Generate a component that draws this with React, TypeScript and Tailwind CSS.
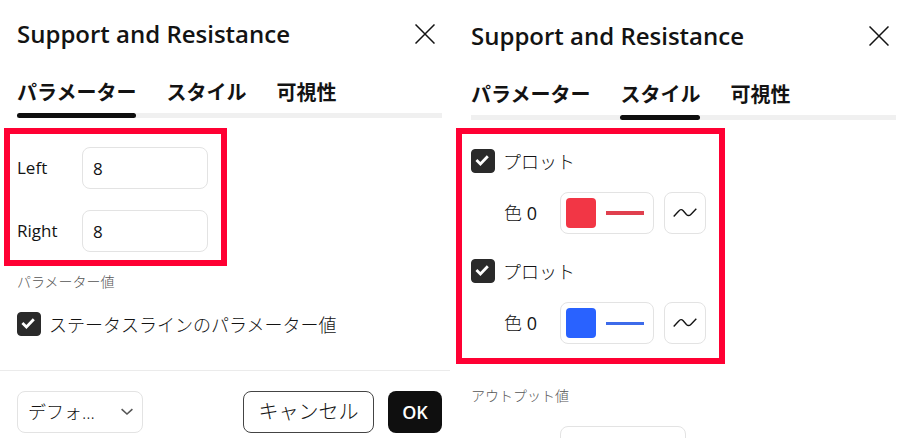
import { useState, type ReactNode } from "react";
import clsx from "clsx";

const tabs = ["パラメーター", "スタイル", "可視性"];

const plots = [
  { id: "plot-1", swatch: "bg-[#f23645]", line: "h-1 bg-[#e0404e]" },
  { id: "plot-2", swatch: "bg-[#2962ff]", line: "h-[3px] bg-[#3d6bea]" },
];

function DialogHeader({ activeTab }: { activeTab: string }) {
  const [active, setActive] = useState(activeTab);

  return (
    <header>
      <div className="flex h-[42px] items-center justify-between">
        <h2 className="text-2xl font-semibold">Support and Resistance</h2>
        <button type="button" aria-label="閉じる" className="py-2 pl-2 pr-[7px]">
          <svg className="size-5" viewBox="0 0 20 20" fill="none" stroke="currentColor" strokeWidth={1.5}>
            <path d="M0.5 0.5l19 19M19.5 0.5l-19 19" />
          </svg>
        </button>
      </div>
      <div role="tablist" className="mt-6 flex gap-[30px] border-b-[5px] border-[#f0f0f0]">
        {tabs.map((tab) => (
          <button
            key={tab}
            type="button"
            role="tab"
            aria-selected={tab === active}
            onClick={() => setActive(tab)}
            className="-mb-[5px] whitespace-nowrap text-xl font-bold"
          >
            {tab}
            <span className={clsx("mt-[6px] block h-[5px] rounded-full", tab === active && "bg-[#0f0f0f]")} />
          </button>
        ))}
      </div>
    </header>
  );
}

function Checkbox({ id, children }: { id: string; children: ReactNode }) {
  return (
    <div className="flex items-center gap-2">
      <span className="grid size-6 shrink-0 *:col-start-1 *:row-start-1">
        <input
          id={id}
          type="checkbox"
          defaultChecked
          className="peer size-6 appearance-none rounded border border-[#2a2a2a] checked:bg-[#2a2a2a]"
        />
        <svg
          className="pointer-events-none invisible size-6 text-white peer-checked:visible"
          viewBox="0 0 24 24"
          fill="none"
          stroke="currentColor"
          strokeWidth={2.8}
        >
          <path d="M5.4 11.1l4 3.9 7.4-7.8" />
        </svg>
      </span>
      <label htmlFor={id} className="whitespace-nowrap pt-[2px] text-lg font-light leading-6">
        {children}
      </label>
    </div>
  );
}

function NumberField({ id, label }: { id: string; label: string }) {
  return (
    <div className="flex items-center">
      <label htmlFor={id} className="w-[65px]">
        {label}
      </label>
      <input
        id={id}
        type="text"
        inputMode="numeric"
        defaultValue="8"
        className="h-[42px] w-[126px] rounded-lg border border-[#e3e3e3] px-[10px]"
      />
    </div>
  );
}

function PlotRow({ id, swatch, line }: { id: string; swatch: string; line: string }) {
  return (
    <div>
      <Checkbox id={id}>プロット</Checkbox>
      <div className="mt-[18px] flex items-center pl-[33px]">
        <span className="w-14 text-lg font-light">
          色 <span className="font-normal">0</span>
        </span>
        <button
          type="button"
          aria-label="色"
          className="flex h-[42px] w-[94px] items-center gap-[10px] rounded-lg border border-[#e3e3e3] px-[5px]"
        >
          <span className={clsx("size-[30px] rounded", swatch)} />
          <span className={clsx("w-[38px]", line)} />
        </button>
        <button
          type="button"
          aria-label="線の種類"
          className="ml-[10px] flex size-[42px] items-center justify-center rounded-lg border border-[#e3e3e3]"
        >
          <svg className="h-3 w-6" viewBox="0 0 24 12" fill="none" stroke="currentColor" strokeWidth={1.4}>
            <path d="M0.7 9.5L5.8 4Q8 1.4 10.2 3.7L13.4 7.4Q15.6 9.6 17.8 7.4L23.3 1.8" />
          </svg>
        </button>
      </div>
    </div>
  );
}

function InputsPanel() {
  return (
    <section className="min-w-0 pt-[13px]">
      <div className="pl-[17px] pr-3">
        <DialogHeader activeTab="パラメーター" />
      </div>
      <div className="ml-1 mt-[10px] flex w-fit flex-col gap-[21px] border-6 border-[#ff0033] pb-2 pl-[7px] pr-[13px] pt-[13px]">
        <NumberField id="left" label="Left" />
        <NumberField id="right" label="Right" />
      </div>
      <div className="px-[17px]">
        <h3 className="mt-[6px] text-sm font-light text-[#555]">パラメーター値</h3>
        <div className="mt-[19px]">
          <Checkbox id="status-line">ステータスラインのパラメーター値</Checkbox>
        </div>
      </div>
      <footer className="mr-1 mt-[33px] flex items-center border-t border-[#ebebeb] pb-1 pl-[17px] pr-2 pt-5">
        <div className="grid w-[126px] items-center *:col-start-1 *:row-start-1">
          <select
            aria-label="デフォルト"
            className="h-[42px] w-full appearance-none rounded-lg border border-[#e3e3e3] px-[10px] text-lg font-light"
          >
            <option>デフォ...</option>
          </select>
          <svg
            className="pointer-events-none mr-[10px] h-2 w-3 justify-self-end text-[#555]"
            viewBox="0 0 12 8"
            fill="none"
            stroke="currentColor"
            strokeWidth={1.6}
          >
            <path d="M0.6 1.2L6 6l5.4-4.8" />
          </svg>
        </div>
        <button type="button" className="ml-auto h-[42px] w-[131px] rounded-lg border border-[#444] text-xl font-light">
          キャンセル
        </button>
        <button type="button" className="ml-[14px] h-[42px] w-[54px] rounded-lg bg-[#0f0f0f] text-lg font-semibold text-white">
          OK
        </button>
      </footer>
    </section>
  );
}

function StylePanel() {
  return (
    <section className="min-w-0 pt-[15px]">
      <div className="pl-[17px] pr-[22px]">
        <DialogHeader activeTab="スタイル" />
      </div>
      <div className="ml-[2px] mt-2 flex w-fit flex-col gap-6 border-6 border-[#ff0033] pb-[14px] pl-[9px] pr-[13px] pt-[14px]">
        {plots.map((plot) => (
          <PlotRow key={plot.id} {...plot} />
        ))}
      </div>
      <div className="pl-[17px]">
        <label htmlFor="precision" className="mt-[22px] block text-sm font-light text-[#555]">
          アウトプット値
        </label>
        <select
          id="precision"
          className="ml-[89px] mt-5 h-[42px] w-[126px] appearance-none rounded-lg border border-[#e3e3e3]"
        />
      </div>
    </section>
  );
}

export default function App() {
  return (
    <main className="grid h-screen grid-cols-[454fr_464fr] overflow-hidden bg-white font-['Open_Sans','Noto_Sans_CJK_JP',sans-serif] text-[17px] text-[#131313]">
      <InputsPanel />
      <StylePanel />
    </main>
  );
}
